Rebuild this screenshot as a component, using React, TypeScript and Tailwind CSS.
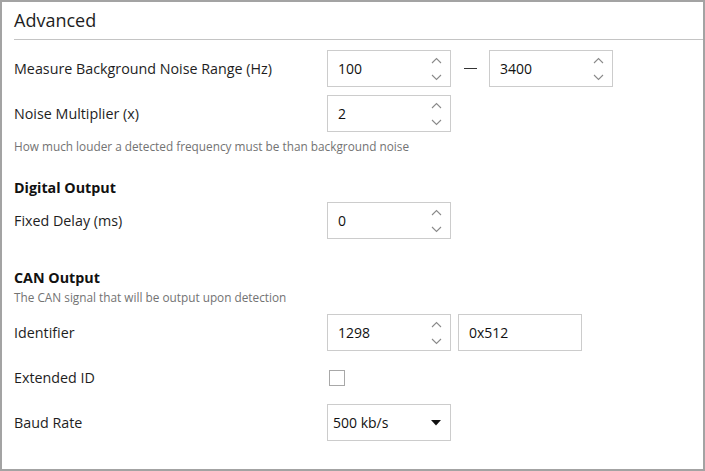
import React from 'react'

const font = { fontFamily: '"Open Sans", "Noto Sans", sans-serif' }

function Chevrons() {
  return (
    <div className="flex flex-col items-center justify-between w-[12px] h-[24px] mr-[8px]">
      <svg width="11" height="7" viewBox="0 0 11 7">
        <polyline points="1,6 5.5,1.5 10,6" fill="none" stroke="#8a8a8a" strokeWidth="1.1" />
      </svg>
      <svg width="11" height="7" viewBox="0 0 11 7">
        <polyline points="1,1 5.5,5.5 10,1" fill="none" stroke="#8a8a8a" strokeWidth="1.1" />
      </svg>
    </div>
  )
}

function SpinBox({ value }: { value: string }) {
  return (
    <div className="w-[124px] h-[37px] border border-[#cccccc] bg-white flex items-center justify-between">
      <span className="pl-[10px] text-[14px] text-[#111]">{value}</span>
      <Chevrons />
    </div>
  )
}

function Row({ label, children, className = '' }: { label: string; children: React.ReactNode; className?: string }) {
  return (
    <div className={`flex items-center h-[37px] ${className}`}>
      <div className="w-[313px] text-[14.3px] text-[#1e1e1e]">{label}</div>
      {children}
    </div>
  )
}

export default function App() {
  return (
    <div style={font} className="w-[705px] h-[471px] border-2 border-[#a3a3a3] bg-white overflow-hidden">
      <div className="ml-[12px] h-[38px] border-b border-[#c4c4c4] flex items-center">
        <h1 className="text-[18px] text-[#1e1e1e] leading-none -mt-[1px]">Advanced</h1>
      </div>

      <div className="pl-[12px]">
        <Row label="Measure Background Noise Range (Hz)" className="mt-[10px]">
          <SpinBox value="100" />
          <div className="w-[38px] flex justify-center">
            <div className="w-[13px] h-[1.5px] bg-[#333]" />
          </div>
          <SpinBox value="3400" />
        </Row>
        <Row label="Noise Multiplier (x)" className="mt-[8px]">
          <SpinBox value="2" />
        </Row>
        <p className="mt-[7px] h-[14px] leading-[14px] text-[11.8px] text-[#737373]">
          How much louder a detected frequency must be than background noise
        </p>

        <h2 className="mt-[25px] h-[20px] leading-[20px] text-[14.3px] font-bold text-[#111]">Digital Output</h2>
        <Row label="Fixed Delay (ms)" className="mt-[4px]">
          <SpinBox value="0" />
        </Row>

        <h2 className="mt-[29px] h-[20px] leading-[20px] text-[14.3px] font-bold text-[#111]">CAN Output</h2>
        <p className="mt-[2px] h-[14px] leading-[14px] text-[11.8px] text-[#737373]">
          The CAN signal that will be output upon detection
        </p>
        <Row label="Identifier" className="mt-[10px]">
          <SpinBox value="1298" />
          <div className="ml-[7px] w-[124px] h-[37px] border border-[#cccccc] flex items-center">
            <span className="pl-[10px] text-[14px] text-[#111]">0x512</span>
          </div>
        </Row>
        <Row label="Extended ID" className="mt-[8px]">
          <div className="ml-[2px] w-[16px] h-[16px] border border-[#a8a8a8] bg-white" />
        </Row>
        <Row label="Baud Rate" className="mt-[8px]">
          <div className="w-[124px] h-[37px] border border-[#cccccc] flex items-center justify-between">
            <span className="pl-[5px] text-[14px] text-[#111]">500 kb/s</span>
            <svg width="10" height="6" viewBox="0 0 10 6" className="mr-[9px]">
              <polygon points="0,0 10,0 5,5.5" fill="#111" />
            </svg>
          </div>
        </Row>
      </div>
    </div>
  )
}
